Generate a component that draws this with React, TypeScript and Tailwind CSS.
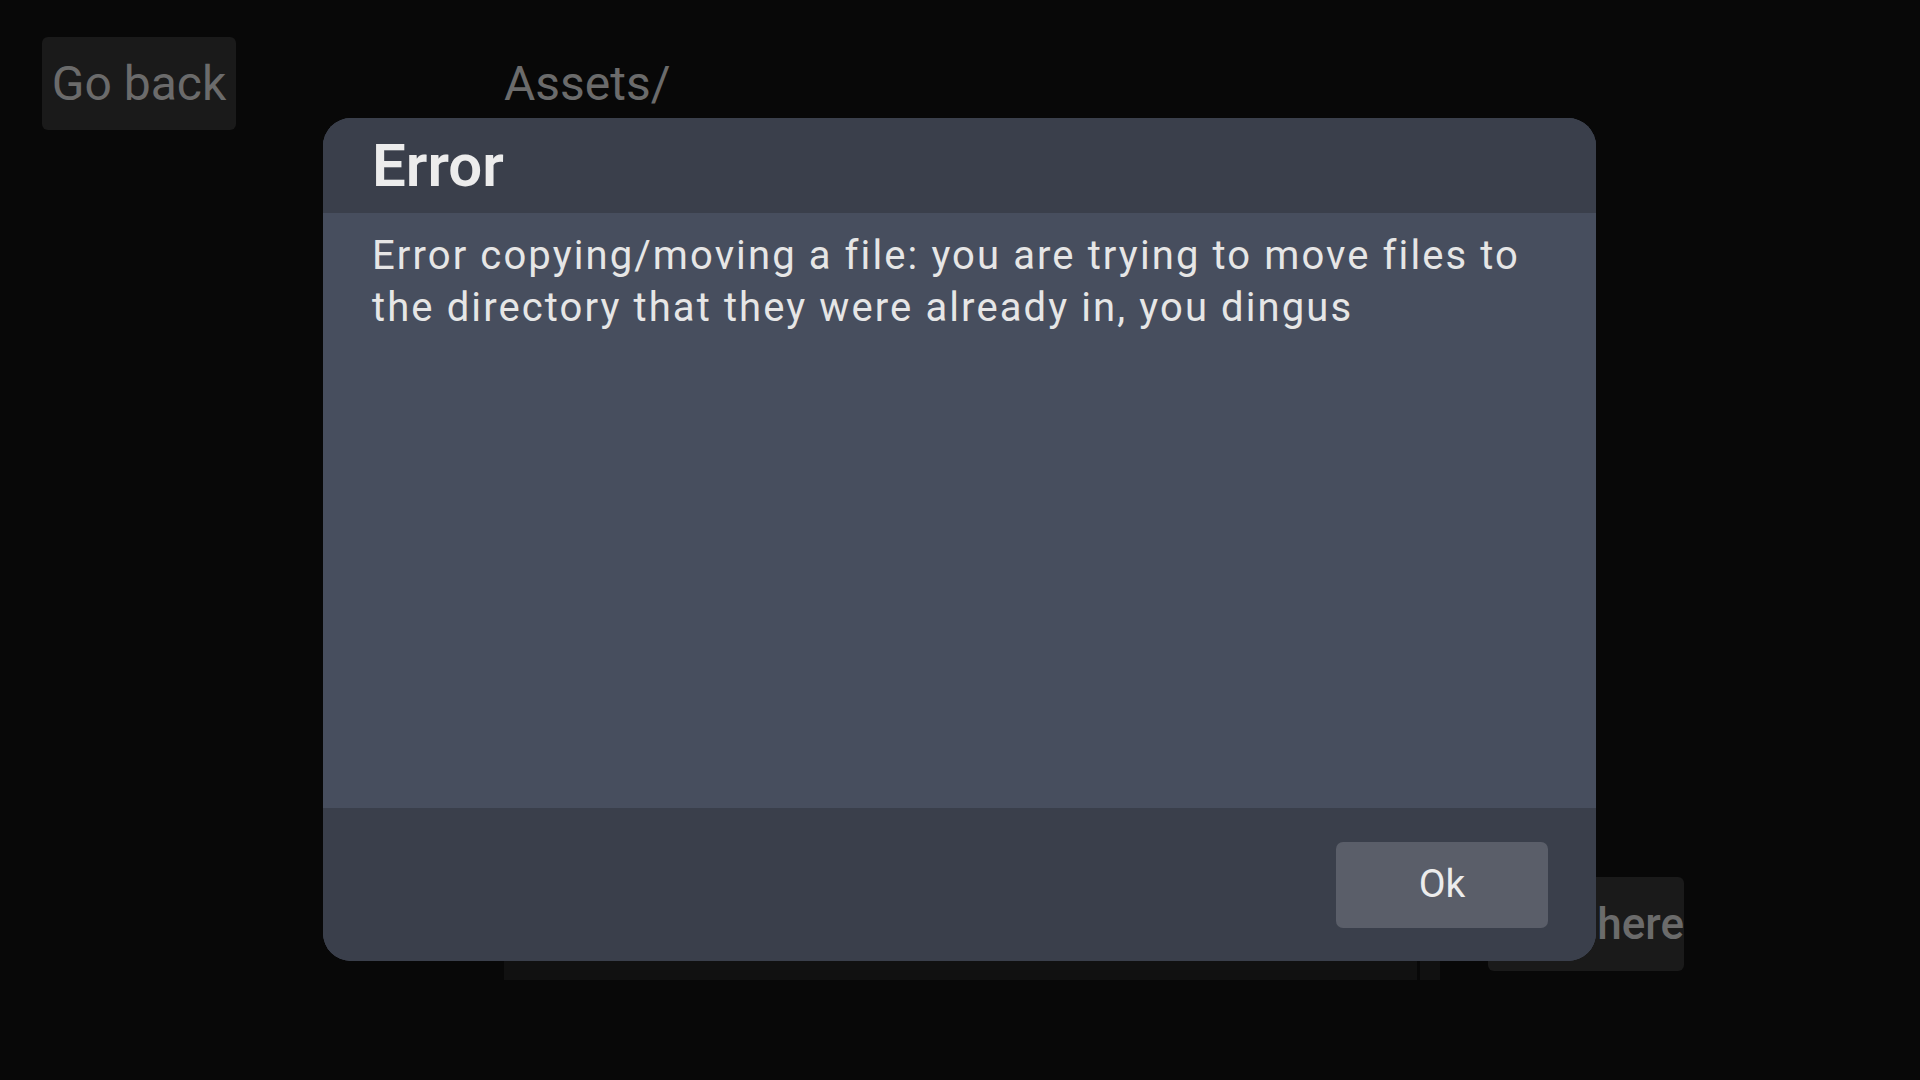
import React from "react";

function ErrorDialog() {
  return (
    <div className="absolute left-[323px] top-[118px] flex h-[843px] w-[1273px] flex-col overflow-hidden rounded-[28px] bg-[#474e5e]">
      <div className="flex h-[95px] items-center bg-[#3a3f4b] px-[49px]">
        <h1 className="text-[60px] font-semibold leading-none text-[#ececec]">
          Error
        </h1>
      </div>
      <div className="flex-1 pl-[49px] pr-[40px] pt-[17px]">
        <p className="text-[40px] leading-[52px] tracking-[2.1px] text-[#e6e6e6]">
          Error copying/moving a file: you are trying to move files to the
          directory that they were already in, you dingus
        </p>
      </div>
      <div className="flex h-[153px] items-center justify-end bg-[#3a3f4b] px-[48px]">
        <button
          type="button"
          className="flex h-[86px] w-[212px] items-center justify-center rounded-[7px] bg-[#5a5e69] text-[39px] text-[#ececec]"
        >
          Ok
        </button>
      </div>
    </div>
  );
}

function App() {
  return (
    <div
      className="relative flex h-[1080px] w-[1920px] overflow-hidden bg-[#080808]"
      style={{ fontFamily: "Roboto, 'Noto Sans', sans-serif" }}
    >
      <div className="w-[504px] shrink-0 pl-[42px] pt-[37px]">
        <button
          type="button"
          className="flex h-[93px] w-[194px] items-center justify-center rounded-[6px] bg-[#1a1a1a] text-[48px] text-[#6b6b6b]"
        >
          Go back
        </button>
      </div>
      <div className="flex w-[936px] shrink-0 flex-col pb-[100px]">
        <div className="flex h-[130px] items-start pt-[37px]">
          <span className="flex h-[93px] items-center text-[48px] text-[#6b6b6b]">
            Assets/
          </span>
        </div>
        <div className="flex flex-1 gap-[3px] pt-[20px]">
          <div className="w-[913px] bg-[#111111]" />
          <div className="w-[20px] bg-[#111111]" />
        </div>
      </div>
      <div className="flex flex-col justify-end pb-[109px] pl-[48px]">
        <button
          type="button"
          className="flex h-[94px] w-[196px] items-center justify-end whitespace-nowrap rounded-[6px] bg-[#1a1a1a] text-[44px] font-medium text-[#6b6b6b]"
        >
          Move here
        </button>
      </div>
      <ErrorDialog />
    </div>
  );
}

export default App;
